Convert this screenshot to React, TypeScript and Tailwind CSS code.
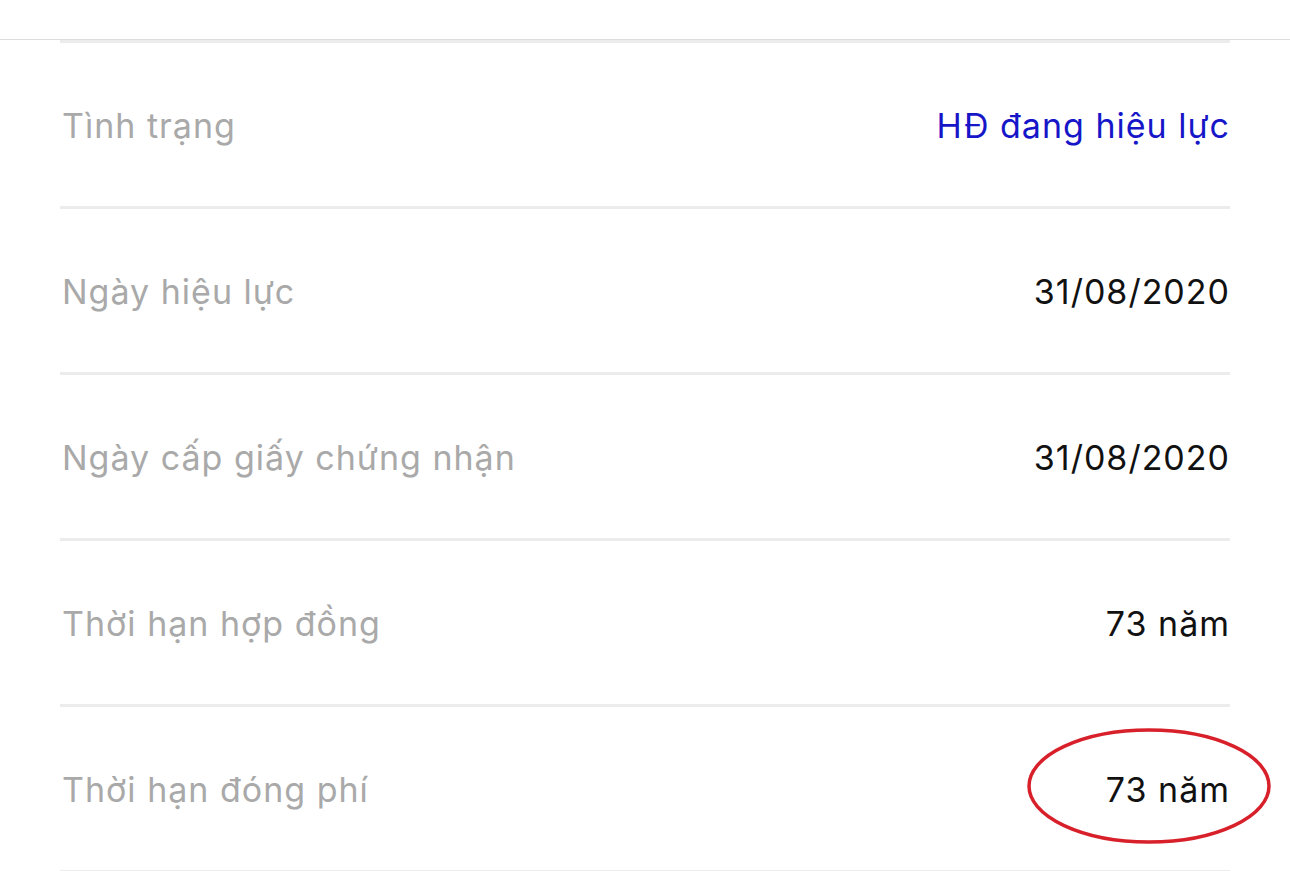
const rows: { label: string; value: string; tone?: "blue" }[] = [
  { label: "Tình trạng", value: "HĐ đang hiệu lực", tone: "blue" },
  { label: "Ngày hiệu lực", value: "31/08/2020" },
  { label: "Ngày cấp giấy chứng nhận", value: "31/08/2020" },
  { label: "Thời hạn hợp đồng", value: "73 năm" },
  { label: "Thời hạn đóng phí", value: "73 năm" },
];

export default function App() {
  return (
    <div
      className="relative h-[871px] w-[1290px] overflow-hidden bg-white"
      style={{ fontFamily: "Inter, 'Noto Sans', sans-serif" }}
    >
      <div className="h-[40px] border-b border-[#dcdcdc]" />
      <div className="mx-[60px] border-t-[3px] border-[#ececec]">
        {rows.map((row, i) => (
          <div
            key={i}
            className="flex h-[166px] items-center justify-between border-b-[3px] border-[#ececec] pl-[2px] pt-[2px] tracking-[1px]"
          >
            <span className="text-[34px] text-[#a9a9a9]">{row.label}</span>
            <span
              className={
                row.tone === "blue"
                  ? "text-[34px] text-[#1616c8]"
                  : "text-[34px] text-[#111111]"
              }
            >
              {row.value}
            </span>
          </div>
        ))}
      </div>
      <svg
        className="absolute left-[1026px] top-[727px]"
        width="246"
        height="120"
        viewBox="0 0 246 120"
      >
        <ellipse
          cx="123"
          cy="59"
          rx="120"
          ry="56"
          fill="none"
          stroke="#d8202a"
          strokeWidth="3.5"
        />
      </svg>
    </div>
  );
}
